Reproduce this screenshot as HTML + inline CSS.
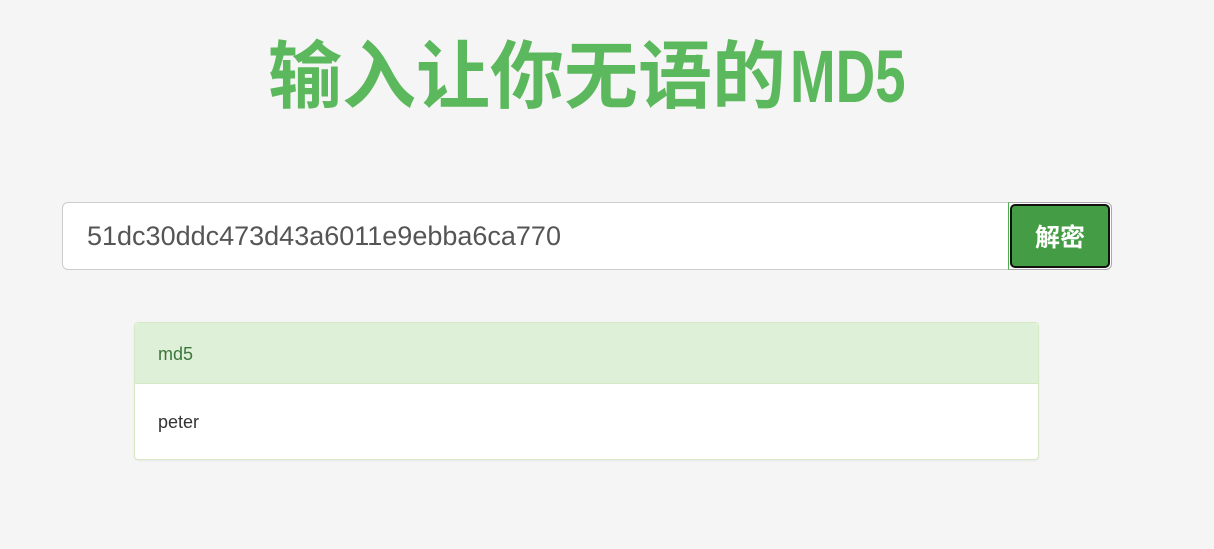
<!DOCTYPE html>
<html><head><meta charset="utf-8">
<style>
body{margin:0;background:#f5f5f5;width:1214px;height:549px;overflow:hidden;font-family:"Liberation Sans","Noto Sans CJK SC",sans-serif;}
h1{position:absolute;left:268px;top:21px;margin:0;font-size:74px;line-height:100px;color:#5cb85c;font-weight:bold;white-space:nowrap;font-family:"Noto Sans CJK SC","WenQuanYi Zen Hei",sans-serif;letter-spacing:0}
h1 span{display:inline-block;transform:scaleX(0.74);transform-origin:left center;font-family:"Liberation Sans",sans-serif;margin-left:4px}
.inp{position:absolute;left:62px;top:202px;width:946px;height:66px;background:#fff;border:1px solid #ccc;border-right:none;border-radius:6px 0 0 6px;}
.inp div{position:absolute;left:24px;top:17px;font-size:27px;color:#555;line-height:32px}
.btnwrap{position:absolute;left:1008px;top:202px;width:102px;height:66px;border:1px solid #aaa;border-left:1px solid #4cae4c;border-radius:0 6px 6px 0;background:#fff}
.btn{position:absolute;left:1px;top:1px;width:96px;height:60px;background:#449d44;border:2px solid #111;border-radius:5px;color:#fff;font-weight:bold;font-size:25px;text-align:center;line-height:60px;font-family:"Noto Sans CJK SC",sans-serif}
.panel{position:absolute;left:134px;top:322px;width:903px;height:136px;background:#fff;border:1px solid #d6e9c6;border-radius:4px;box-shadow:0 1px 2px rgba(0,0,0,.05)}
.ph{height:60px;background:#dff0d8;border-bottom:1px solid #d6e9c6;color:#3c763d;font-size:18px;line-height:62px;padding-left:23px;border-radius:4px 4px 0 0}
.pb{padding-left:23px;font-size:18px;color:#333;line-height:76px}
</style></head><body>
<h1>输入让你无语的<span>MD5</span></h1>
<div class="inp"><div>51dc30ddc473d43a6011e9ebba6ca770</div></div>
<div class="btnwrap"><div class="btn">解密</div></div>
<div class="panel"><div class="ph">md5</div><div class="pb">peter</div></div>
</body></html>
